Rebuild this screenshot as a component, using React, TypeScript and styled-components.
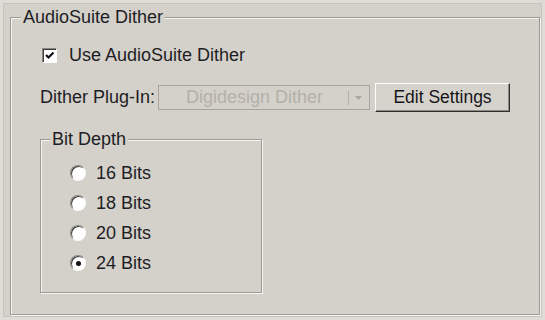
import React from "react";
import styled, { createGlobalStyle } from "styled-components";

const GlobalStyle = createGlobalStyle`
  html, body {
    margin: 0;
    padding: 0;
    background: #dedcd6;
  }
  body {
    font-family: "Liberation Sans", Arial, sans-serif;
    color: #1e1d24;
  }
`;

const Page = styled.div`
  width: 545px;
  height: 320px;
  padding: 3px;
  box-sizing: border-box;
`;

const Frame = styled.div`
  width: 539px;
  height: 314px;
  box-sizing: border-box;
  border: 1px solid #c6c3bb;
  background: #d4d1ca;
  padding: 13px 0 0 6px;
`;

const GroupBox = styled.div<{ $w: number; $h: number }>`
  position: relative;
  width: ${(p) => p.$w}px;
  height: ${(p) => p.$h}px;
  box-sizing: border-box;
  border: 1px solid #9d9a93;
  box-shadow: inset 1px 1px 0 #f6f5f2, 1px 1px 0 #f6f5f2;
  display: flex;
  flex-direction: column;
`;

const Legend = styled.span<{ $left: number }>`
  position: absolute;
  top: -11px;
  left: ${(p) => p.$left}px;
  padding: 0 2px;
  background: #d4d1ca;
  font-size: 18px;
  line-height: 20px;
  white-space: nowrap;
`;

const OuterBody = styled.div`
  display: flex;
  flex-direction: column;
  padding: 26px 0 0 29px;
`;

const CheckRow = styled.label`
  display: flex;
  align-items: center;
  height: 22px;
  gap: 12px;
  margin-left: 2px;
  font-size: 18px;
`;

const CheckBox = styled.span`
  width: 15px;
  height: 15px;
  box-sizing: border-box;
  background: #fff;
  border: 1px solid;
  border-color: #8a877f #fbfbf9 #fbfbf9 #8a877f;
  box-shadow: inset 1px 1px 0 #3a3a3a;
  display: flex;
  align-items: center;
  justify-content: center;
`;

const PluginRow = styled.div`
  display: flex;
  align-items: center;
  height: 29px;
  margin-top: 17px;
`;

const FieldLabel = styled.span`
  font-size: 18px;
  width: 118px;
  white-space: nowrap;
`;

const Combo = styled.div`
  width: 212px;
  height: 25px;
  box-sizing: border-box;
  border: 1px solid #a7a49d;
  display: flex;
  align-items: center;
  color: #b3b0a9;
  font-size: 18px;
`;

const ComboText = styled.span`
  flex: 1;
  text-align: center;
  padding-left: 2px;
`;

const ComboArrow = styled.span`
  width: 18px;
  height: 14px;
  border-left: 1px solid #b3b0a9;
  display: flex;
  align-items: center;
  justify-content: center;
  margin-right: 2px;
`;

const Button = styled.button`
  margin-left: 5px;
  width: 135px;
  height: 29px;
  box-sizing: border-box;
  background: #d6d3cc;
  border: 1px solid;
  border-color: #fdfdfc #2e2e2e #2e2e2e #fdfdfc;
  box-shadow: inset -1px -1px 0 #8d8a83;
  font-family: "Liberation Sans", Arial, sans-serif;
  font-size: 17.5px;
  color: #16151a;
  padding: 0;
`;

const BitBox = styled.div`
  margin-top: 27px;
`;

const RadioList = styled.div`
  display: flex;
  flex-direction: column;
  padding: 18px 0 0 29px;
`;

const RadioRow = styled.label`
  display: flex;
  align-items: center;
  height: 30px;
  gap: 10px;
  font-size: 18px;
`;

const Radio = styled.span<{ $on?: boolean }>`
  width: 16px;
  height: 16px;
  box-sizing: border-box;
  border-radius: 50%;
  background: #fff;
  border: 1px solid;
  border-color: #8a877f #fbfbf9 #fbfbf9 #8a877f;
  box-shadow: inset 1px 1px 0 #3a3a3a;
  display: flex;
  align-items: center;
  justify-content: center;
  &::after {
    content: "";
    width: 5px;
    height: 5px;
    border-radius: 50%;
    background: ${(p) => (p.$on ? "#111" : "transparent")};
  }
`;

const bits = [16, 18, 20, 24];

export default function App() {
  return (
    <Page>
      <GlobalStyle />
      <Frame>
        <GroupBox $w={530} $h={298}>
          <Legend $left={10}>AudioSuite Dither</Legend>
          <OuterBody>
            <CheckRow>
              <CheckBox>
                <svg width="11" height="11" viewBox="0 0 11 11">
                  <path d="M2 5 L4.5 7.5 L9.5 2.5" stroke="#111" strokeWidth="2.2" fill="none" />
                </svg>
              </CheckBox>
              Use AudioSuite Dither
            </CheckRow>
            <PluginRow>
              <FieldLabel>Dither Plug-In:</FieldLabel>
              <Combo>
                <ComboText>Digidesign Dither</ComboText>
                <ComboArrow>
                  <svg width="7" height="4" viewBox="0 0 7 4">
                    <path d="M0 0 H7 L3.5 4 Z" fill="#a9a69f" />
                  </svg>
                </ComboArrow>
              </Combo>
              <Button>Edit Settings</Button>
            </PluginRow>
            <BitBox>
              <GroupBox $w={222} $h={154}>
                <Legend $left={9}>Bit Depth</Legend>
                <RadioList>
                  {bits.map((b) => (
                    <RadioRow key={b}>
                      <Radio $on={b === 24} />
                      {b} Bits
                    </RadioRow>
                  ))}
                </RadioList>
              </GroupBox>
            </BitBox>
          </OuterBody>
        </GroupBox>
      </Frame>
    </Page>
  );
}
